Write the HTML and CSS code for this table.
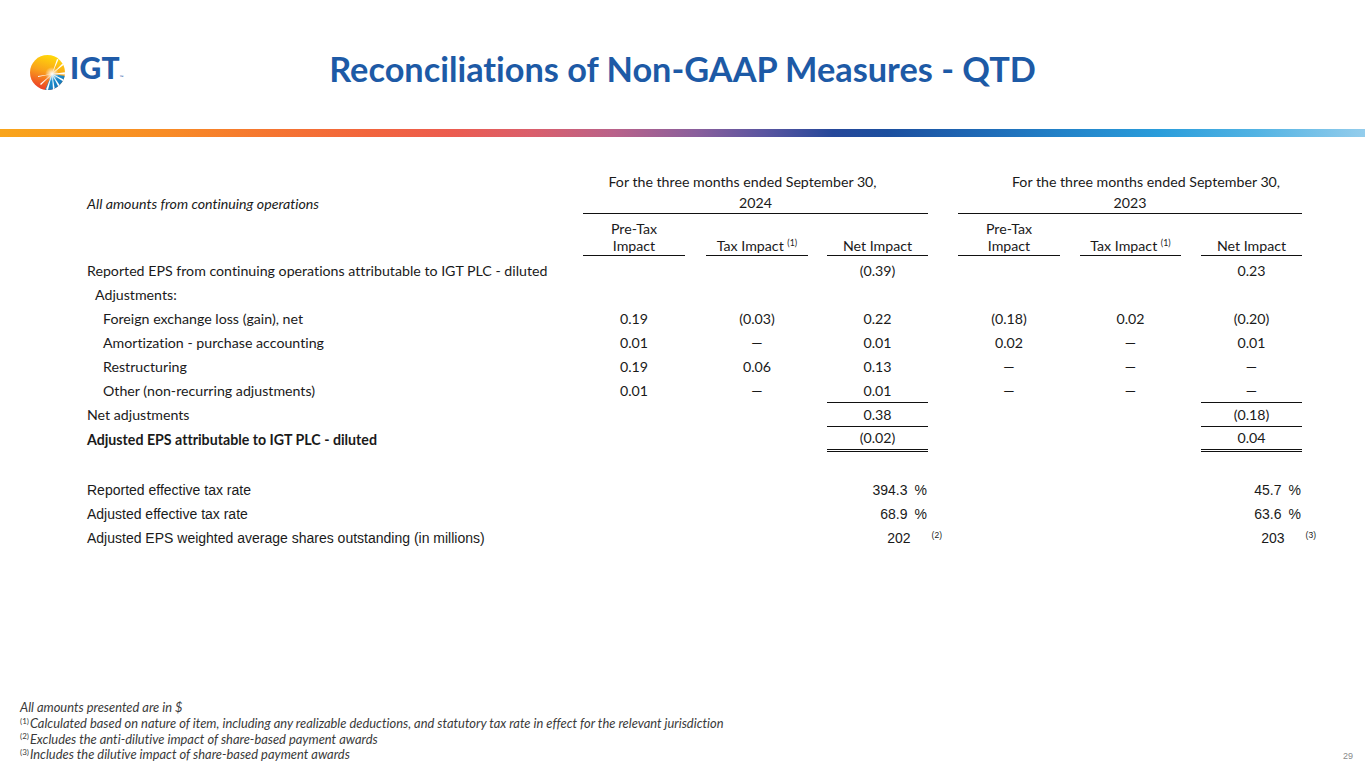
FILE: index.html
```html
<!DOCTYPE html>
<html lang="en">
<head>
<meta charset="utf-8">
<title>Reconciliations of Non-GAAP Measures - QTD</title>
<link rel="stylesheet" href="styles.css">
</head>
<body>
<div class="page">
  <header class="top">
    <div class="logo">
      <svg class="logo-mark" width="35" height="35" viewBox="0 0 35 35" aria-hidden="true">
        <defs>
          <linearGradient id="sun" x1="0.5" y1="0" x2="0.2" y2="1">
            <stop offset="0" stop-color="#ffd60a"/>
            <stop offset="0.45" stop-color="#f9a11b"/>
            <stop offset="0.8" stop-color="#f05a24"/>
            <stop offset="1" stop-color="#e8352a"/>
          </linearGradient>
          <linearGradient id="sea" x1="0" y1="0" x2="1" y2="1">
            <stop offset="0" stop-color="#2aa9e0"/>
            <stop offset="1" stop-color="#0b62ad"/>
          </linearGradient>
          <radialGradient id="glow" cx="0.5" cy="0.5" r="0.5">
            <stop offset="0" stop-color="#ffffff" stop-opacity="1"/>
            <stop offset="1" stop-color="#ffffff" stop-opacity="0"/>
          </radialGradient>
          <clipPath id="disc"><circle cx="17.5" cy="17.5" r="17.5"/></clipPath>
        </defs>
        <circle cx="17.5" cy="17.5" r="17.5" fill="url(#sun)"/>
        <g clip-path="url(#disc)">
          <path d="M22 19 L35 21 L35 35 L15 35 Z" fill="url(#sea)"/>
          <g fill="#ffffff">
            <path d="M22 19 L36 17 L36 19.5 Z"/>
            <path d="M22 19 L35 25 L34 27 Z"/>
            <path d="M22 19 L31 32 L29 33 Z"/>
            <path d="M22 19 L25 35 L23 35 Z"/>
            <path d="M22 19 L18 35 L16 34.5 Z"/>
            <path d="M22 19 L11 30 L10 29 Z"/>
            <path d="M22 19 L33 8 L34 9.5 Z"/>
            <path d="M22 19 L27 4 L28.5 4.5 Z"/>
            <path d="M22 19 L8 22 L8 21 Z"/>
          </g>
          <circle cx="22" cy="19" r="7" fill="url(#glow)"/>
        </g>
      </svg>
      <span class="logo-word">IGT<span class="tm">™</span></span>
    </div>
    <h1 class="title">Reconciliations of Non-GAAP Measures - QTD</h1>
    <div></div>
  </header>
  <div class="bar"></div>

  <section class="recon">
    <div class="row hdr1">
      <div class="g1 period p1">For the three months ended September 30,</div>
      <div class="g2 period p2">For the three months ended September 30,</div>
    </div>
    <div class="row hdr2">
      <div class="label"><em>All amounts from continuing operations</em></div>
      <div class="g1 year">2024</div>
      <div class="g2 year">2023</div>
    </div>
    <div class="row hdr3">
      <div class="c1 sub">Pre-Tax<br>Impact</div>
      <div class="c2 sub">Tax Impact <sup>(1)</sup></div>
      <div class="c3 sub">Net Impact</div>
      <div class="c4 sub">Pre-Tax<br>Impact</div>
      <div class="c5 sub">Tax Impact <sup>(1)</sup></div>
      <div class="c6 sub">Net Impact</div>
    </div>

    <div class="row data first">
      <div class="label">Reported EPS from continuing operations attributable to IGT PLC - diluted</div>
      <div class="c3 num">(0.39)</div>
      <div class="c6 num">0.23</div>
    </div>
    <div class="row data">
      <div class="label ind1">Adjustments:</div>
    </div>
    <div class="row data">
      <div class="label ind2">Foreign exchange loss (gain), net</div>
      <div class="c1 num">0.19</div>
      <div class="c2 num">(0.03)</div>
      <div class="c3 num">0.22</div>
      <div class="c4 num">(0.18)</div>
      <div class="c5 num">0.02</div>
      <div class="c6 num">(0.20)</div>
    </div>
    <div class="row data">
      <div class="label ind2">Amortization - purchase accounting</div>
      <div class="c1 num">0.01</div>
      <div class="c2 num">—</div>
      <div class="c3 num">0.01</div>
      <div class="c4 num">0.02</div>
      <div class="c5 num">—</div>
      <div class="c6 num">0.01</div>
    </div>
    <div class="row data">
      <div class="label ind2">Restructuring</div>
      <div class="c1 num">0.19</div>
      <div class="c2 num">0.06</div>
      <div class="c3 num">0.13</div>
      <div class="c4 num">—</div>
      <div class="c5 num">—</div>
      <div class="c6 num">—</div>
    </div>
    <div class="row data">
      <div class="label ind2">Other (non-recurring adjustments)</div>
      <div class="c1 num">0.01</div>
      <div class="c2 num">—</div>
      <div class="c3 num rule">0.01</div>
      <div class="c4 num">—</div>
      <div class="c5 num">—</div>
      <div class="c6 num rule">—</div>
    </div>
    <div class="row data">
      <div class="label">Net adjustments</div>
      <div class="c3 num rule">0.38</div>
      <div class="c6 num rule">(0.18)</div>
    </div>
    <div class="row data total">
      <div class="label">Adjusted EPS attributable to IGT PLC - diluted</div>
      <div class="c3 num dbl">(0.02)</div>
      <div class="c6 num dbl">0.04</div>
    </div>

    <div class="rates">
      <div class="row rate">
        <div class="label">Reported effective tax rate</div>
        <div class="c3 fig"><span>394.3</span><span class="pct">%</span></div>
        <div class="c6 fig"><span>45.7</span><span class="pct">%</span></div>
      </div>
      <div class="row rate">
        <div class="label">Adjusted effective tax rate</div>
        <div class="c3 fig"><span>68.9</span><span class="pct">%</span></div>
        <div class="c6 fig"><span>63.6</span><span class="pct">%</span></div>
      </div>
      <div class="row rate">
        <div class="label">Adjusted EPS weighted average shares outstanding (in millions)</div>
        <div class="c3 fig"><span>202</span><span class="note">(2)</span></div>
        <div class="c6 fig"><span>203</span><span class="note">(3)</span></div>
      </div>
    </div>
  </section>

  <footer class="foot">
    <div class="notes">
      <p>All amounts presented are in $</p>
      <p><sup>(1)</sup>Calculated based on nature of item, including any realizable deductions, and statutory tax rate in effect for the relevant jurisdiction</p>
      <p><sup>(2)</sup>Excludes the anti-dilutive impact of share-based payment awards</p>
      <p><sup>(3)</sup>Includes the dilutive impact of share-based payment awards</p>
    </div>
    <div class="pagenum">29</div>
  </footer>
</div>
</body>
</html>
```

FILE: styles.css
```css
* { box-sizing: border-box; }

html, body {
  margin: 0;
  padding: 0;
  background: #ffffff;
}

body {
  font-family: Lato, "Open Sans", "Liberation Sans", sans-serif;
  font-variant-ligatures: none;
  color: #1a1a1a;
}

.page {
  width: 1365px;
  height: 768px;
  overflow: hidden;
  display: flex;
  flex-direction: column;
}

/* ---------- header ---------- */
.top {
  height: 129px;
  display: grid;
  grid-template-columns: 1fr auto 1fr;
  align-items: start;
}

.logo {
  display: flex;
  align-items: center;
  padding-left: 30px;
  padding-top: 52px;
}

.logo-mark {
  display: block;
  flex: none;
}

.logo-word {
  font-family: Lato, "Liberation Sans", sans-serif;
  font-weight: 900;
  font-size: 30px;
  line-height: 30px;
  letter-spacing: 0.3px;
  color: #1f5ba8;
  margin-left: 5px;
  position: relative;
  top: 0px;
}

.logo-word .tm {
  font-size: 5px;
  font-weight: 400;
  letter-spacing: 0;
  vertical-align: baseline;
}

.title {
  margin: 0;
  padding-top: 48px;
  font-family: Lato, "Liberation Sans", sans-serif;
  font-weight: 700;
  font-size: 34.3px;
  line-height: 42px;
  color: #1d5aa6;
  white-space: nowrap;
}

.bar {
  height: 8px;
  flex: none;
  background: linear-gradient(90deg,
    #f9a51b 0%,
    #f88c25 12%,
    #f57531 20%,
    #f2653d 27%,
    #ec5c4f 33%,
    #da5f6c 39%,
    #b9628a 45%,
    #8a5f9c 51%,
    #5a55a0 56%,
    #26489a 61%,
    #1c4f9f 65%,
    #1e66b3 71%,
    #2283c9 78%,
    #2a9ddb 85%,
    #52b3e3 92%,
    #94cdec 100%);
}

/* ---------- table ---------- */
.recon {
  margin-top: 34px;
  padding-left: 87px;
  font-size: 14.2px;
}

.row {
  display: grid;
  grid-template-columns: 496px 102px 21px 102px 19px 101px 30px 102px 20px 101px 20px 101px;
  align-items: end;
}

.label { grid-column: 1; white-space: nowrap; }
.c1 { grid-column: 2; }
.c2 { grid-column: 4; }
.c3 { grid-column: 6; }
.c4 { grid-column: 8; }
.c5 { grid-column: 10; }
.c6 { grid-column: 12; }
.g1 { grid-column: 2 / 7; }
.g2 { grid-column: 8 / 13; }

.hdr1 { line-height: 22px; }
.period { text-align: center; white-space: nowrap; }
.p1 { padding-right: 26px; }
.p2 { padding-left: 32px; }

.hdr2 { line-height: 20px; }
.year {
  text-align: center;
  border-bottom: 1px solid #111;
}

.hdr3 { line-height: 17px; }
.sub {
  text-align: center;
  padding-top: 6px;
  padding-bottom: 1px;
  border-bottom: 1px solid #111;
  white-space: nowrap;
}

.sub sup, .notes sup {
  font-size: 0.62em;
  line-height: 0;
  vertical-align: 0.55em;
}

.data { line-height: 24px; }
.data.first { margin-top: 3px; }
.num { text-align: center; }
.num.rule {
  line-height: 23px;
  border-bottom: 1px solid #111;
}
.num.dbl {
  line-height: 22px;
  border-bottom: 3px double #111;
}
.total .label { font-weight: 700; }

.ind1 { padding-left: 8px; }
.ind2 { padding-left: 16px; }

.rates {
  margin-top: 26px;
  font-family: "Liberation Sans", Arial, sans-serif;
  font-size: 14px;
}

.rate { line-height: 24px; }

.fig {
  display: flex;
  justify-content: flex-end;
  align-items: baseline;
  white-space: nowrap;
}

.fig .pct {
  margin-left: 7px;
  margin-right: 1px;
}

.fig .note {
  font-size: 8.5px;
  line-height: 8px;
  margin-left: 21px;
  margin-right: -14px;
  position: relative;
  top: -5px;
}

/* ---------- footer ---------- */
.foot {
  margin-top: auto;
  display: flex;
  justify-content: space-between;
  align-items: flex-end;
  padding: 0 12px 5px 20px;
}

.notes p {
  margin: 0;
  font-style: italic;
  font-size: 12.9px;
  line-height: 15.7px;
  color: #3a3a3a;
  white-space: nowrap;
}

.notes sup {
  font-style: normal;
  margin-right: 1px;
}

.pagenum {
  font-family: "Liberation Sans", Arial, sans-serif;
  font-size: 9px;
  line-height: 12px;
  color: #8a8a8a;
  padding-bottom: 1px;
}
```
